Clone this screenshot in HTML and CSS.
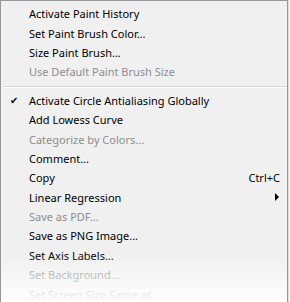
FILE: index.html
```html
<!DOCTYPE html>
<html>
<head>
    <title>Context Menu</title>
    <link rel="stylesheet" href="styles.css">
</head>
<body>
    <div class="menu">
        <div class="item">Activate Paint History</div>
        <div class="item">Set Paint Brush Color...</div>
        <div class="item">Size Paint Brush...</div>
        <div class="item disabled">Use Default Paint Brush Size</div>
        <div class="separator"></div>
        <div class="item checked">
            <span class="check">&#10004;</span>
            Activate Circle Antialiasing Globally
        </div>
        <div class="item">Add Lowess Curve</div>
        <div class="item disabled">Categorize by Colors...</div>
        <div class="item">Comment...</div>
        <div class="item">Copy<span class="shortcut">Ctrl+C</span></div>
        <div class="item">Linear Regression<span class="arrow"></span></div>
        <div class="item disabled">Save as PDF...</div>
        <div class="item">Save as PNG Image...</div>
        <div class="item">Set Axis Labels...</div>
        <div class="item disabled">Set Background...</div>
        <div class="item disabled">Set Screen Size Same as</div>
    </div>
</body>
</html>
```

FILE: styles.css
```css
body {
    margin: 0;
    background-color: #ffffff;
    font-family: "Noto Sans", "Open Sans", sans-serif;
    font-size: 11px;
}

.menu {
    position: relative;
    width: 288px;
    height: 302px;
    padding-top: 3px;
    box-sizing: border-box;
    background-color: #f0f0f0;
    border: 1px solid #979797;
    border-bottom: none;
    box-shadow: 1px 0 0 #dcdcdc;
    overflow: hidden;
}

.menu::after {
    content: "";
    position: absolute;
    left: -1px;
    right: -1px;
    bottom: 0;
    height: 48px;
    background: linear-gradient(to bottom, rgba(255, 255, 255, 0), rgba(255, 255, 255, 0.95) 100%);
}

.item {
    position: relative;
    display: flex;
    align-items: center;
    height: 19.4px;
    padding-left: 28px;
    padding-right: 7px;
    color: #000000;
    white-space: nowrap;
}

.disabled {
    color: #8e8e8e;
}

.check {
    position: absolute;
    left: 9px;
    font-size: 10px;
}

.shortcut {
    margin-left: auto;
}

.arrow {
    margin-left: auto;
    margin-right: 1px;
    width: 0;
    height: 0;
    border-top: 4px solid transparent;
    border-bottom: 4px solid transparent;
    border-left: 4px solid #000000;
}

.separator {
    height: 1px;
    margin: 4px 0 3px 2px;
    background-color: #d7d7d7;
    border-bottom: 1px solid #ffffff;
}
```
